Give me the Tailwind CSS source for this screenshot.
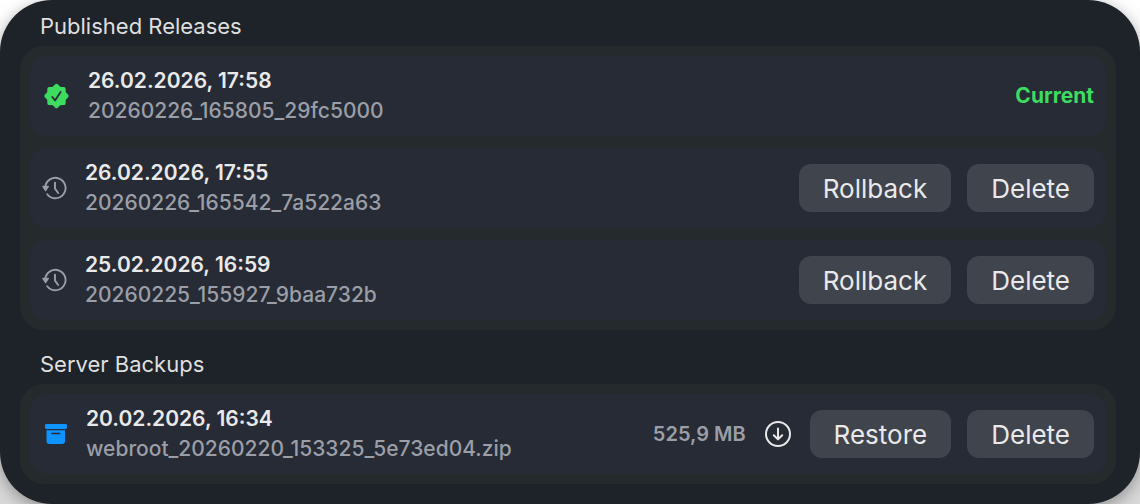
<!DOCTYPE html>
<html lang="en">
<head>
  <meta charset="UTF-8" />
  <meta name="viewport" content="width=device-width, initial-scale=1" />
  <title>Releases &amp; Backups</title>
  <script src="https://cdn.jsdelivr.net/npm/@tailwindcss/browser@4"></script>
</head>
<body class="min-h-screen bg-gradient-to-b from-white to-[#d8d8d8] font-['Inter',sans-serif] text-[#e9e9ea]">

  <main class="min-h-screen rounded-[52px] bg-[#1e2329] pt-3 pb-5 pl-5 pr-6 shadow-[0_4px_16px_rgba(0,0,0,0.35)]">

    <section class="mb-5">
      <h2 class="px-5 pb-1.5 text-[22px] leading-7 text-[#dfdfdf]">Published Releases</h2>
      <ul class="flex flex-col gap-3 rounded-3xl bg-[#252a2d] p-2.5">

        <li class="flex h-20 items-center gap-4 rounded-2xl bg-[#262b35] px-3">
          <svg class="h-[30px] w-[30px] shrink-0" viewBox="0 0 30 30" aria-hidden="true">
            <path fill="#3ddc60" stroke="#3ddc60" stroke-width="3.6" stroke-linejoin="round" d="M14.5 4.6 L17.6 7.5 L21.8 7.7 L22 11.9 L24.9 15 L22 18.1 L21.8 22.3 L17.6 22.5 L14.5 25.4 L11.4 22.5 L7.2 22.3 L7 18.1 L4.1 15 L7 11.9 L7.2 7.7 L11.4 7.5 Z" />
            <path fill="none" stroke="#262b35" stroke-width="1.8" stroke-linecap="round" stroke-linejoin="round" d="M10.3 16 L13.2 19.3 L18.6 11" />
          </svg>
          <div class="min-w-0 flex-1 text-[21px] leading-[30px]">
            <p class="font-semibold">26.02.2026, 17:58</p>
            <p class="font-medium text-[#9b9ea7]">20260226_165805_29fc5000</p>
          </div>
          <span class="text-[21px] font-bold text-[#3ddc60]">Current</span>
        </li>

        <li class="flex h-20 items-center gap-4 rounded-2xl bg-[#262b35] px-3">
          <svg class="h-[27px] w-[27px] shrink-0" viewBox="0 0 27 27" fill="none" stroke="#9b9ea7" stroke-width="1.9" stroke-linecap="round" stroke-linejoin="round" aria-hidden="true">
            <path d="M3.2 12 A10.2 10.2 0 1 1 5.2 19.2" />
            <path d="M13 7.6 V13.6 L16.2 18" />
            <path fill="#9b9ea7" stroke-width="1.2" d="M0.8 11.4 H6.4 L3.6 15.8 Z" />
          </svg>
          <div class="min-w-0 flex-1 text-[21px] leading-[30px]">
            <p class="font-semibold">26.02.2026, 17:55</p>
            <p class="font-medium text-[#9b9ea7]">20260226_165542_7a522a63</p>
          </div>
          <button type="button" class="h-12 rounded-xl bg-[#40444d] px-6 text-[26px]">Rollback</button>
          <button type="button" class="h-12 rounded-xl bg-[#40444d] px-6 text-[26px]">Delete</button>
        </li>

        <li class="flex h-20 items-center gap-4 rounded-2xl bg-[#262b35] px-3">
          <svg class="h-[27px] w-[27px] shrink-0" viewBox="0 0 27 27" fill="none" stroke="#9b9ea7" stroke-width="1.9" stroke-linecap="round" stroke-linejoin="round" aria-hidden="true">
            <path d="M3.2 12 A10.2 10.2 0 1 1 5.2 19.2" />
            <path d="M13 7.6 V13.6 L16.2 18" />
            <path fill="#9b9ea7" stroke-width="1.2" d="M0.8 11.4 H6.4 L3.6 15.8 Z" />
          </svg>
          <div class="min-w-0 flex-1 text-[21px] leading-[30px]">
            <p class="font-semibold">25.02.2026, 16:59</p>
            <p class="font-medium text-[#9b9ea7]">20260225_155927_9baa732b</p>
          </div>
          <button type="button" class="h-12 rounded-xl bg-[#40444d] px-6 text-[26px]">Rollback</button>
          <button type="button" class="h-12 rounded-xl bg-[#40444d] px-6 text-[26px]">Delete</button>
        </li>
      </ul>
    </section>

    <section>
      <h2 class="px-5 pb-1.5 text-[22px] leading-7 text-[#dfdfdf]">Server Backups</h2>
      <ul class="flex flex-col gap-3 rounded-3xl bg-[#252a2d] p-2.5">

        <li class="flex h-20 items-center gap-4 rounded-2xl bg-[#262b35] px-3">
          <svg class="h-7 w-7 shrink-0" viewBox="0 0 28 28" aria-hidden="true">
            <rect x="3" y="4" width="22" height="5" rx="1.4" fill="#0f94ff" />
            <path fill="#0f94ff" d="M4.5 10.2 H23 V21 Q23 24 20 24 H7.5 Q4.5 24 4.5 21 Z" />
            <path stroke="#262b35" stroke-width="1.6" stroke-linecap="round" d="M10 13.5 H17.6" />
          </svg>
          <div class="min-w-0 flex-1 text-[21px] leading-[30px]">
            <p class="font-semibold">20.02.2026, 16:34</p>
            <p class="font-medium text-[#9b9ea7]">webroot_20260220_153325_5e73ed04.zip</p>
          </div>
          <span class="text-xl font-semibold text-[#9b9ea7]">525,9 MB</span>
          <button type="button" aria-label="Download backup">
            <svg class="h-8 w-8" viewBox="0 0 32 32" fill="none" stroke="#e9e9ea" stroke-width="2" stroke-linecap="round" stroke-linejoin="round" aria-hidden="true">
              <circle cx="16" cy="16" r="12" />
              <path d="M16 10.5 V21 M11.8 17.2 L16 21.4 L20.2 17.2" />
            </svg>
          </button>
          <button type="button" class="h-12 rounded-xl bg-[#40444d] px-6 text-[26px]">Restore</button>
          <button type="button" class="h-12 rounded-xl bg-[#40444d] px-6 text-[26px]">Delete</button>
        </li>
      </ul>
    </section>

  </main>
</body>
</html>
